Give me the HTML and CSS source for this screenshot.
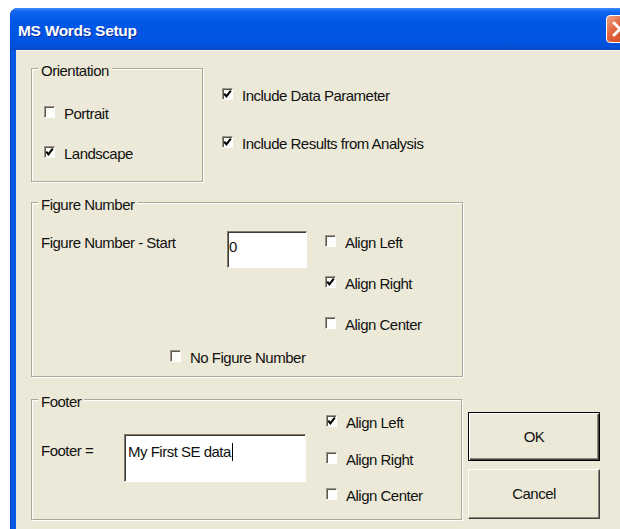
FILE: index.html
```html
<!DOCTYPE html>
<html lang="en">
<head>
<meta charset="utf-8">
<title>MS Words Setup</title>
<link rel="stylesheet" href="styles.css">
</head>
<body>
<div class="window">
  <div class="titlebar">
    <span class="title">MS Words Setup</span>
    <span class="close">
      <svg viewBox="0 0 28 28" width="28" height="28"><path d="M8 8 L20 20 M20 8 L8 20" /></svg>
    </span>
  </div>

  <div class="client">
    <div class="top-row">
      <div class="group orientation">
        <div class="caption">Orientation</div>
        <div class="check first">
          <span class="box"></span>Portrait
        </div>
        <div class="check next">
          <span class="box"><svg viewBox="0 0 9 10" width="9" height="10"><path d="M1.2 4.6 L3.4 7.4 L7.8 1.6"/></svg></span>Landscape
        </div>
      </div>

      <div class="include">
        <div class="check">
          <span class="box"><svg viewBox="0 0 9 10" width="9" height="10"><path d="M1.2 4.6 L3.4 7.4 L7.8 1.6"/></svg></span>Include Data Parameter
        </div>
        <div class="check later">
          <span class="box"><svg viewBox="0 0 9 10" width="9" height="10"><path d="M1.2 4.6 L3.4 7.4 L7.8 1.6"/></svg></span>Include Results from Analysis
        </div>
      </div>
    </div>

    <div class="group figure">
      <div class="caption">Figure Number</div>
      <div class="figure-row">
        <div class="row-label start-label">Figure Number - Start</div>
        <div class="field start-field">0</div>
        <div class="align-col figure-align">
          <div class="check"><span class="box"></span>Align Left</div>
          <div class="check"><span class="box"><svg viewBox="0 0 9 10" width="9" height="10"><path d="M1.2 4.6 L3.4 7.4 L7.8 1.6"/></svg></span>Align Right</div>
          <div class="check"><span class="box"></span>Align Center</div>
        </div>
      </div>
      <div class="check no-figure"><span class="box"></span>No Figure Number</div>
    </div>

    <div class="bottom-row">
      <div class="group footer">
        <div class="caption">Footer</div>
        <div class="footer-row">
          <div class="row-label footer-label">Footer =</div>
          <div class="field footer-field">My First SE data<span class="caret"></span></div>
          <div class="align-col footer-align">
            <div class="check"><span class="box"><svg viewBox="0 0 9 10" width="9" height="10"><path d="M1.2 4.6 L3.4 7.4 L7.8 1.6"/></svg></span>Align Left</div>
            <div class="check"><span class="box"></span>Align Right</div>
            <div class="check"><span class="box"></span>Align Center</div>
          </div>
        </div>
      </div>

      <div class="buttons">
        <div class="btn btn-default">OK</div>
        <div class="btn btn-cancel">Cancel</div>
      </div>
    </div>
  </div>
</div>
</body>
</html>
```

FILE: styles.css
```css
html, body {
  margin: 0;
  height: 100%;
  overflow: hidden;
  background: #fff;
}

body {
  font-family: "Liberation Sans", Arial, sans-serif;
  font-size: 15px;
  letter-spacing: -0.5px;
  color: #111;
}

/* window frame */
.window {
  margin: 8px 0 0 10px;
  width: 630px;
  height: 530px;
  background: #0a5ae6;
  border-radius: 8px 8px 0 0;
  box-shadow: inset 1px 0 0 #0a3fbf;
}

.titlebar {
  box-sizing: border-box;
  height: 42px;
  display: flex;
  align-items: center;
  padding: 4px 6px 0 8px;
  border-radius: 8px 8px 0 0;
  background: linear-gradient(#3d8cff 0, #1367f0 8%, #0158e6 30%, #0055e3 70%, #0450d8 92%, #0a46c4 100%);
}

.title {
  font-weight: bold;
  font-size: 15.5px;
  letter-spacing: -0.3px;
  line-height: 20px;
  color: #fff;
  text-shadow: 1px 1px 0 #0b2e9a;
}

.close {
  align-self: flex-start;
  margin: 3px 0 0 auto;
  box-sizing: border-box;
  width: 28px;
  height: 28px;
  border: 1px solid #fff;
  border-radius: 4px;
  background: linear-gradient(135deg, #f0a286 0, #e2653f 40%, #c8431c 100%);
}

.close svg {
  display: block;
  margin: -1px;
  stroke: #fff;
  stroke-width: 3;
  stroke-linecap: round;
  fill: none;
}

/* dialog client area */
.client {
  box-sizing: border-box;
  margin-left: 6px;
  height: 488px;
  padding: 18px 0 0 15px;
  background: #ece9d8;
  box-shadow: inset 0 1px 0 #f6f5ee;
}

/* group boxes */
.group {
  box-sizing: border-box;
  border: 1px solid #aca899;
  box-shadow: inset 1px 1px 0 #fff, 1px 1px 0 #fff;
}

.caption {
  width: fit-content;
  margin: -6px 0 0 6px;
  padding: 0 3px;
  line-height: 16px;
  background: #ece9d8;
}

/* checkboxes */
.check {
  display: flex;
  align-items: center;
  height: 20px;
  line-height: 16px;
  white-space: nowrap;
}

.box {
  flex-shrink: 0;
  box-sizing: border-box;
  width: 11px;
  height: 12px;
  margin: 0 9px 4px 0;
  background: #fdfdfb;
  border-style: solid;
  border-width: 1px;
  border-color: #9a978a #fff #fff #9a978a;
  box-shadow: inset 1px 1px 0 #5a584e;
}

.box svg {
  display: block;
  stroke: #000;
  stroke-width: 2.1;
  fill: none;
}

/* top row */
.top-row {
  display: flex;
}

.orientation {
  width: 172px;
  height: 114px;
}

.orientation .check {
  margin-left: 12px;
}

.orientation .first {
  margin-top: 25px;
}

.orientation .next {
  margin-top: 20px;
}

.include {
  margin-left: 19px;
  padding-top: 18px;
}

.include .later {
  margin-top: 28px;
}

/* figure number group */
.figure {
  margin-top: 20px;
  width: 432px;
  height: 175px;
}

.figure-row {
  display: flex;
  align-items: flex-start;
  margin: 20px 0 0 9px;
}

.row-label {
  line-height: 16px;
  white-space: nowrap;
}

.start-label {
  width: 186px;
  margin-top: 2px;
}

.field {
  box-sizing: border-box;
  background: #fff;
  border-style: solid;
  border-width: 1px;
  border-color: #7f7d72 #fff #fff #7f7d72;
  box-shadow: inset 1px 1px 0 #3c3b36;
  line-height: 16px;
  white-space: nowrap;
}

.start-field {
  width: 80px;
  height: 37px;
  margin-top: -2px;
  padding: 7px 0 0 1px;
}

.align-col {
  display: flex;
  flex-direction: column;
}

.figure-align {
  margin-left: 18px;
  gap: 21px;
}

.no-figure {
  margin: 13px 0 0 138px;
}

/* footer row */
.bottom-row {
  display: flex;
  margin-top: 22px;
}

.footer {
  width: 431px;
  height: 121px;
}

.footer-row {
  display: flex;
  align-items: flex-start;
  margin: 3px 0 0 9px;
}

.footer-label {
  width: 83px;
  margin-top: 30px;
}

.footer-field {
  width: 182px;
  height: 48px;
  margin-top: 21px;
  padding: 8px 0 0 3px;
}

.caret {
  display: inline-block;
  width: 1px;
  height: 18px;
  margin-left: 1px;
  vertical-align: -4px;
  background: #000;
}

.footer-align {
  margin-left: 20px;
  gap: 16.5px;
}

/* push buttons */
.buttons {
  display: flex;
  flex-direction: column;
  gap: 8px;
  width: 132px;
  margin-left: 6px;
  padding-top: 13px;
}

.btn {
  box-sizing: border-box;
  display: flex;
  align-items: center;
  justify-content: center;
  background: #ece9d8;
  line-height: 16px;
}

.btn-default {
  height: 49px;
  border: 1px solid #000;
  box-shadow: inset 1px 1px 0 #fff, inset -1px -1px 0 #404040, inset -2px -2px 0 #8a877a;
}

.btn-cancel {
  height: 50px;
  border-style: solid;
  border-width: 1px;
  border-color: #fff #404040 #404040 #fff;
  box-shadow: inset -1px -1px 0 #8a877a;
}
```
